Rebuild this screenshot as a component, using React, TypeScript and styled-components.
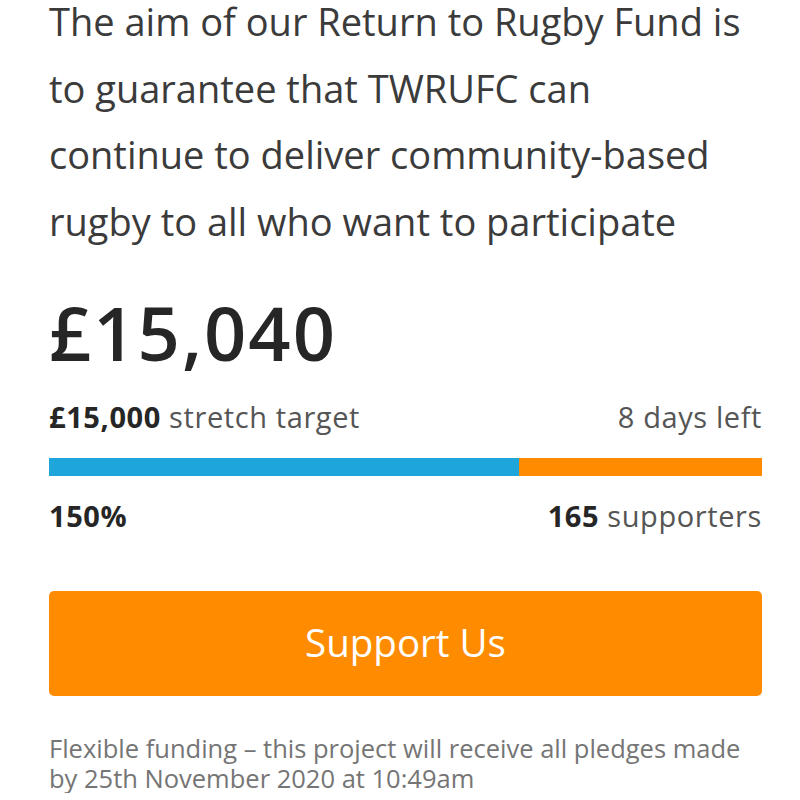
import React from "react";
import styled, { createGlobalStyle } from "styled-components";

const Global = createGlobalStyle`
  html, body { margin: 0; padding: 0; background: #ffffff; overflow: hidden; }
  body { font-family: "Open Sans", "Noto Sans", sans-serif; }
`;

const Card = styled.div`
  width: 713px;
  padding-left: 49px;
  display: flex;
  flex-direction: column;
`;

const Intro = styled.p`
  margin: -12px 0 0;
  font-size: 38px;
  line-height: 66.6px;
  color: #3b3b3b;
  font-weight: 400;
`;

const Amount = styled.div`
  margin-top: 39px;
  font-size: 74px;
  line-height: 80px;
  font-weight: 600;
  letter-spacing: 2px;
  color: #262626;
`;

const Row = styled.div<{ $mt: number }>`
  display: flex;
  justify-content: space-between;
  align-items: baseline;
  margin-top: ${(p) => p.$mt}px;
  font-size: 29px;
  line-height: 34px;
  letter-spacing: 0.6px;
  color: #555555;
`;

const Strong = styled.strong`
  font-weight: 700;
  color: #262626;
`;

const Bar = styled.div`
  margin-top: 24px;
  height: 18px;
  display: flex;
  background: #ff8c00;
`;

const Fill = styled.div`
  height: 100%;
  background: #1ea6db;
`;

const Button = styled.button`
  margin-top: 58px;
  height: 105px;
  padding: 0 0 4px;
  border: none;
  border-radius: 5px;
  background: #ff8c00;
  color: #ffffff;
  font-family: "Open Sans", "Noto Sans", sans-serif;
  font-size: 38.5px;
  cursor: pointer;
`;

const Note = styled.div`
  margin-top: 37px;
  display: flex;
  flex-direction: column;
  font-size: 25.5px;
  line-height: 30px;
  color: #757575;
`;

export default function App() {
  return (
    <>
      <Global />
      <Card>
        <Intro>
          The aim of our Return to Rugby Fund is
          <br />
          to guarantee that TWRUFC can
          <br />
          continue to deliver community-based
          <br />
          rugby to all who want to participate
        </Intro>
        <Amount>£15,040</Amount>
        <Row $mt={27}>
          <span>
            <Strong>£15,000</Strong> stretch target
          </span>
          <span>8 days left</span>
        </Row>
        <Bar>
          <Fill style={{ width: `${(470 / 713) * 100}%` }} />
        </Bar>
        <Row $mt={23}>
          <Strong>150%</Strong>
          <span>
            <Strong>165</Strong> supporters
          </span>
        </Row>
        <Button>Support Us</Button>
        <Note>
          <span>Flexible funding – this project will receive all pledges made</span>
          <span>by 25th November 2020 at 10:49am</span>
        </Note>
      </Card>
    </>
  );
}
